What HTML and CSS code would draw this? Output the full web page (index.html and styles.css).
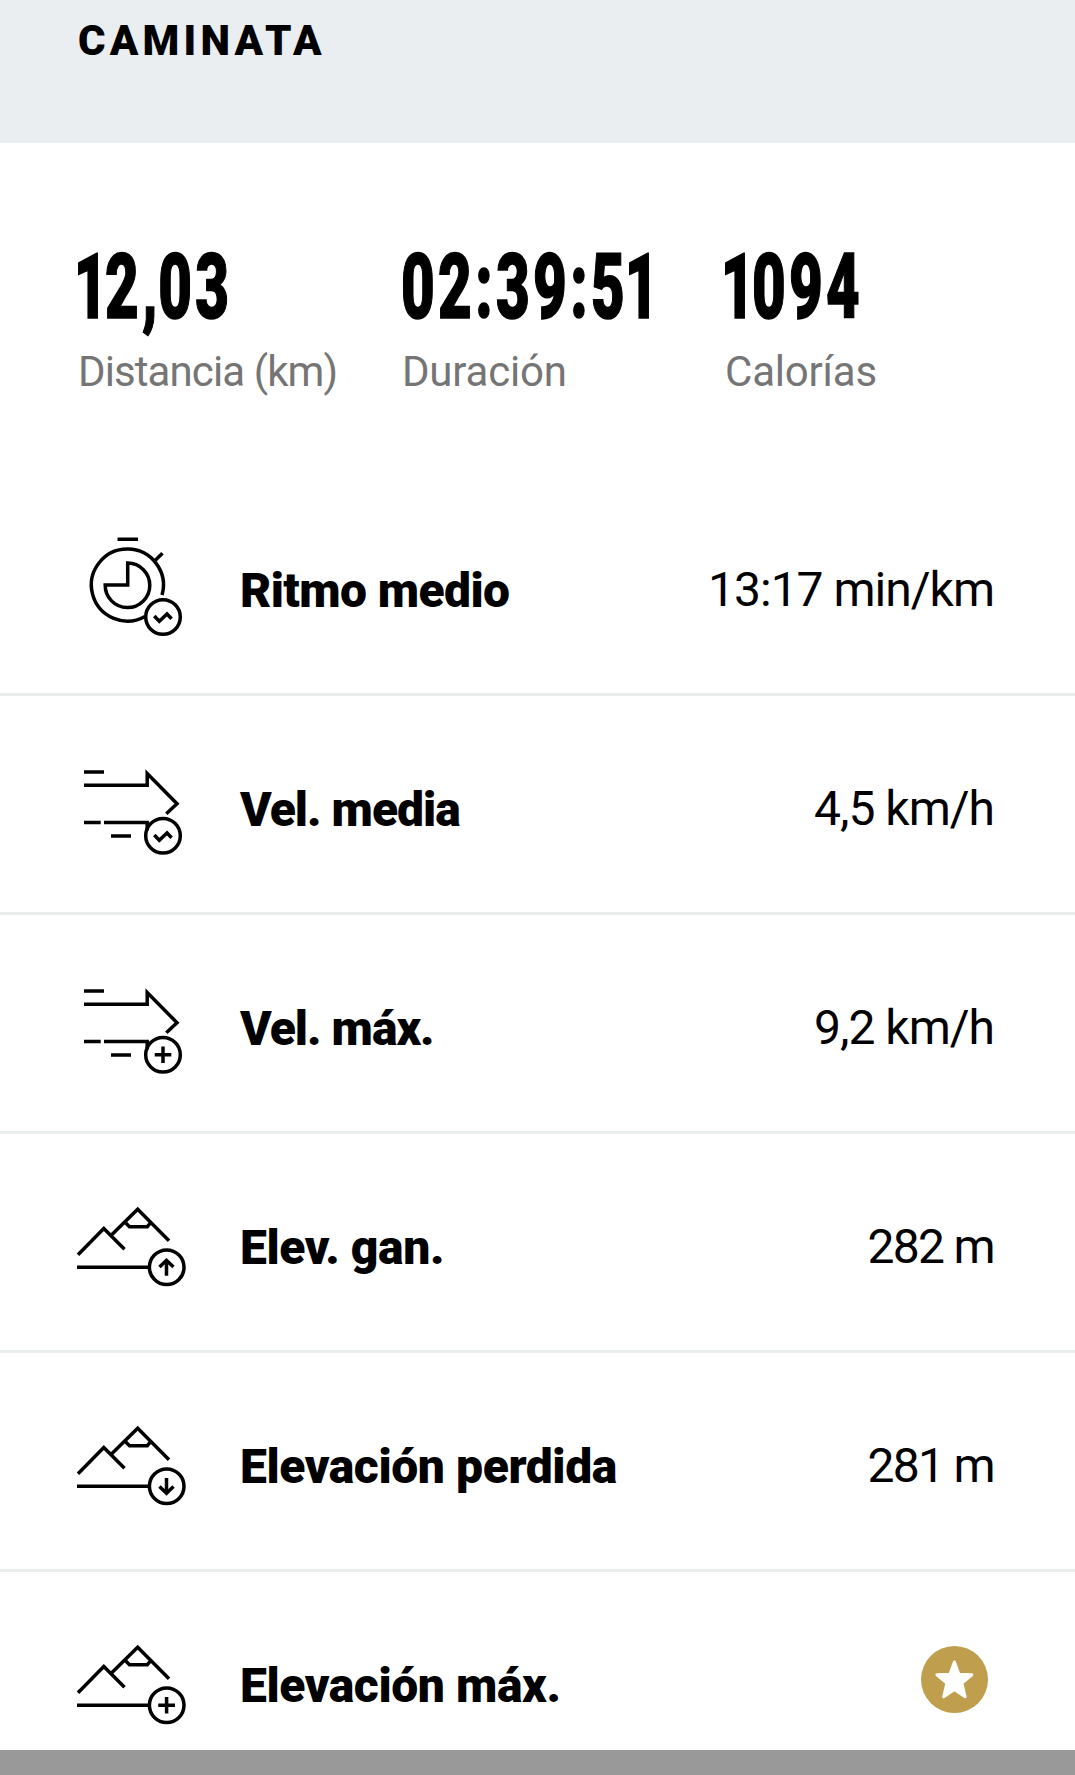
FILE: index.html
```html
<!DOCTYPE html>
<html lang="es">
<head>
    <meta charset="UTF-8">
    <meta name="viewport" content="width=device-width, initial-scale=1.0">
    <title>Caminata</title>
    <link rel="stylesheet" href="styles.css">
</head>
<body>

    <main class="content">
        <header>
            <h1>CAMINATA</h1>
        </header>

        <section class="summary">
            <div class="stat">
                <div class="number"><span class="one">1</span>2<span class="comma">,</span>03</div>
                <div class="caption distance">Distancia (km)</div>
            </div>
            <div class="stat">
                <div class="number time">02:39:5<span class="one">1</span></div>
                <div class="caption">Duración</div>
            </div>
            <div class="stat">
                <div class="number"><span class="one">1</span>094</div>
                <div class="caption">Calorías</div>
            </div>
        </section>

        <section class="details">
            <div class="row">
                <svg class="icon" viewBox="0 0 130 130">
                    <path d="M47.5 19.3H68M84.5 41l8-7.7M92 75A36 36 0 1 0 75 96.5"/>
                    <path d="M57.7 43V65H35.2A22.3 22.3 0 1 0 57.7 43z"/>
                    <circle cx="93" cy="97" r="17.3"/>
                    <path d="M84.3 96l5 5.2 7.7-7.2 4.6 4.7"/>
                </svg>
                <span class="label">Ritmo medio</span>
                <span class="value">13:17 min/km</span>
            </div>
            <div class="row speed">
                <svg class="icon" viewBox="0 0 130 130">
                    <path d="M14 33h20M14 46.3h63.2V34.5L107 64.7l-10.7 10M14 83.5h16.7M34 83.5h43.2v8M41 97h20"/>
                    <circle cx="93" cy="96.7" r="17.3"/>
                    <path d="M84.3 96l5 5.2 7.7-7.2 4.6 4.7"/>
                </svg>
                <span class="label">Vel. media</span>
                <span class="value">4,5 km/h</span>
            </div>
            <div class="row speed">
                <svg class="icon" viewBox="0 0 130 130">
                    <path d="M14 33h20M14 46.3h63.2V34.5L107 64.7l-10.7 10M14 83.5h16.7M34 83.5h43.2v8M41 97h20"/>
                    <circle cx="93" cy="96.7" r="17.3"/>
                    <path d="M84.7 96.7h16.6M93 88.4V105"/>
                </svg>
                <span class="label">Vel. máx.</span>
                <span class="value">9,2 km/h</span>
            </div>
            <div class="row elevation">
                <svg class="icon" viewBox="0 0 130 130">
                    <path d="M8 77.7l25.8-26.2 20.7 20.7M42 57.5l25.7-25.2L99 63.7M55.3 45.5l4.2 4.2h17.8l3.5-4.2M7 90.3h72"/>
                    <circle cx="96.7" cy="90.3" r="17.3"/>
                    <path d="M96.5 98.8V84M89.5 90l7-6.7 7 6.7"/>
                </svg>
                <span class="label">Elev. gan.</span>
                <span class="value">282 m</span>
            </div>
            <div class="row elevation">
                <svg class="icon" viewBox="0 0 130 130">
                    <path d="M8 77.7l25.8-26.2 20.7 20.7M42 57.5l25.7-25.2L99 63.7M55.3 45.5l4.2 4.2h17.8l3.5-4.2M7 90.3h72"/>
                    <circle cx="96.7" cy="90.3" r="17.3"/>
                    <path d="M96.5 82v14.8M89.5 90.6l7 6.7 7-6.7"/>
                </svg>
                <span class="label">Elevación perdida</span>
                <span class="value">281 m</span>
            </div>
            <div class="row elevation">
                <svg class="icon" viewBox="0 0 130 130">
                    <path d="M8 77.7l25.8-26.2 20.7 20.7M42 57.5l25.7-25.2L99 63.7M55.3 45.5l4.2 4.2h17.8l3.5-4.2M7 90.3h72"/>
                    <circle cx="96.7" cy="90.3" r="17.3"/>
                    <path d="M88.2 90.3h16.8M96.6 82v16.6"/>
                </svg>
                <span class="label">Elevación máx.</span>
                <svg class="star" viewBox="0 0 67 67">
                    <circle cx="33.5" cy="33.5" r="33.5"/>
                    <path d="M33.4 16l4.5 12.2 13 .6-10 8.3 3.2 13.7-10.7-7.3-10.7 7.3 3.2-13.7-10-8.3 13-.6z"/>
                </svg>
            </div>
        </section>
    </main>

    <div class="bottom-bar"></div>

</body>
</html>
```

FILE: styles.css
```css
* {
    box-sizing: border-box;
}

body {
    margin: 0;
    background: #fff;
    color: #000;
    font-family: Roboto, 'Liberation Sans', sans-serif;
}

.content {
    height: 1750px;
    overflow: hidden;
}

header {
    height: 143px;
    padding: 16px 78px;
    background: #eaeef0;
}

h1 {
    margin: 0;
    font-size: 42px;
    line-height: 50px;
    font-weight: 900;
    letter-spacing: 4.2px;
}

.summary {
    display: grid;
    grid-template-columns: 324px 323px 1fr;
    height: 334px;
    padding: 89px 0 0 77px;
}

.number {
    width: max-content;
    font-size: 91px;
    line-height: 110px;
    font-weight: 900;
    letter-spacing: 5px;
    white-space: nowrap;
    transform: scaleX(0.64);
    transform-origin: left;
    -webkit-text-stroke: 1.5px #000;
}

.time {
    letter-spacing: 5.2px;
}

.one {
    margin-left: -5px;
    letter-spacing: -4px;
}

.comma {
    letter-spacing: 1px;
}

.caption {
    margin: 5px 0 0 1px;
    font-size: 42px;
    line-height: 50px;
    letter-spacing: -0.2px;
    color: #757575;
    white-space: nowrap;
}

.distance {
    letter-spacing: -0.9px;
}

.row {
    display: flex;
    align-items: center;
    height: 219px;
    padding: 0 81px 0 70px;
    border-bottom: 3px solid #e9edee;
}

.icon {
    width: 130px;
    height: 130px;
    margin-right: 40px;
    fill: none;
    stroke: #000;
    stroke-width: 3.5;
}

.label {
    flex: 1;
    padding-top: 11px;
    font-size: 48px;
    line-height: 56px;
    font-weight: 900;
    letter-spacing: -0.6px;
}

.value {
    padding-top: 9px;
    font-size: 48px;
    line-height: 56px;
    letter-spacing: -1px;
}

.speed .label {
    letter-spacing: -1px;
}

.elevation .label {
    letter-spacing: -0.4px;
}

.elevation .value {
    letter-spacing: -1.7px;
}

.star {
    width: 67px;
    height: 67px;
    margin: -1px 6px 0 0;
    fill: #bf9f4d;
}

.star path {
    fill: #fff;
    stroke: #fff;
    stroke-width: 3;
    stroke-linejoin: round;
}

.bottom-bar {
    height: 25px;
    background: #999;
}
```
